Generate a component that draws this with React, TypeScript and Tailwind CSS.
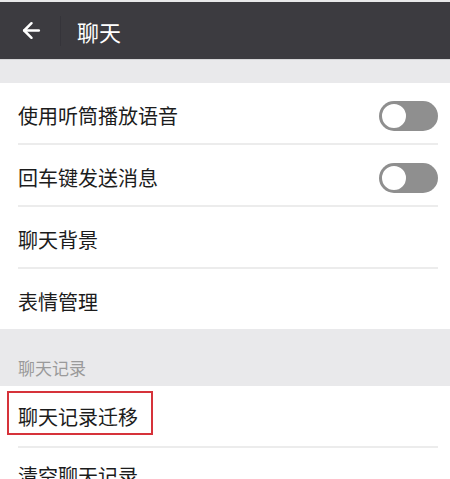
import { ArrowLeft } from 'lucide-react';

const FONT = { fontFamily: '"Noto Sans CJK SC", "Noto Sans", sans-serif' };

function Toggle() {
  return (
    <div className="relative h-[30px] w-[59px] rounded-full bg-[#8f8f8f]">
      <div className="absolute left-[1px] top-[1px] h-[28px] w-[28px] rounded-full border-2 border-[#8f8f8f] bg-white" />
    </div>
  );
}

function Row({
  label,
  toggle,
  divider = true,
  boxed,
}: {
  label: string;
  toggle?: boolean;
  divider?: boolean;
  boxed?: boolean;
}) {
  return (
    <div className="bg-white">
      <div className="flex h-[60px] items-center justify-between pl-[18px] pr-[12px] pt-[6px]">
        <span className="text-[20px] leading-none text-[#1c1c1c]">{label}</span>
        {toggle && <Toggle />}
        {boxed && (
          <div className="pointer-events-none absolute left-[7px] h-[44px] w-[146px] border-2 border-[#d6323a]" />
        )}
      </div>
      {divider && <div className="ml-[18px] mr-[12px] h-[2px] bg-[#ececec]" />}
    </div>
  );
}

export default function App() {
  return (
    <div className="relative h-[479px] w-[450px] overflow-hidden bg-white" style={FONT}>
      <div className="h-[2px] bg-[#e8e8ea]" />
      {/* Title bar */}
      <div className="flex h-[57px] items-center bg-[#3c3b40]">
        <div className="flex w-[60px] items-center pl-[19px]">
          <ArrowLeft size={25} strokeWidth={2.4} className="text-white" />
        </div>
        <div className="h-[30px] w-px bg-[#35343a]" />
        <span className="ml-[16px] text-[22px] leading-none text-white">聊天</span>
      </div>
      <div className="h-[24px] border-t border-[#d6d6d8] bg-[#e9e9eb]" />

      <Row label="使用听筒播放语音" toggle />
      <Row label="回车键发送消息" toggle />
      <Row label="聊天背景" />
      <Row label="表情管理" divider={false} />

      <div className="flex h-[57px] items-end bg-[#e9e9eb] pb-[10px] pl-[18px]">
        <span className="text-[17px] leading-none text-[#9a9a9a]">聊天记录</span>
      </div>

      <div className="relative">
        <div className="relative flex h-[60px] items-center pl-[18px] pt-[2px]">
          <span className="text-[20px] leading-none text-[#1c1c1c]">聊天记录迁移</span>
          <div className="pointer-events-none absolute left-[7px] top-[5px] h-[44px] w-[146px] border-2 border-[#d6323a]" />
        </div>
        <div className="ml-[18px] mr-[12px] h-[2px] bg-[#ececec]" />
      </div>
      <div className="flex h-[60px] items-start pl-[18px] pt-[18px]">
        <span className="text-[20px] leading-none text-[#1c1c1c]">清空聊天记录</span>
      </div>
    </div>
  );
}
